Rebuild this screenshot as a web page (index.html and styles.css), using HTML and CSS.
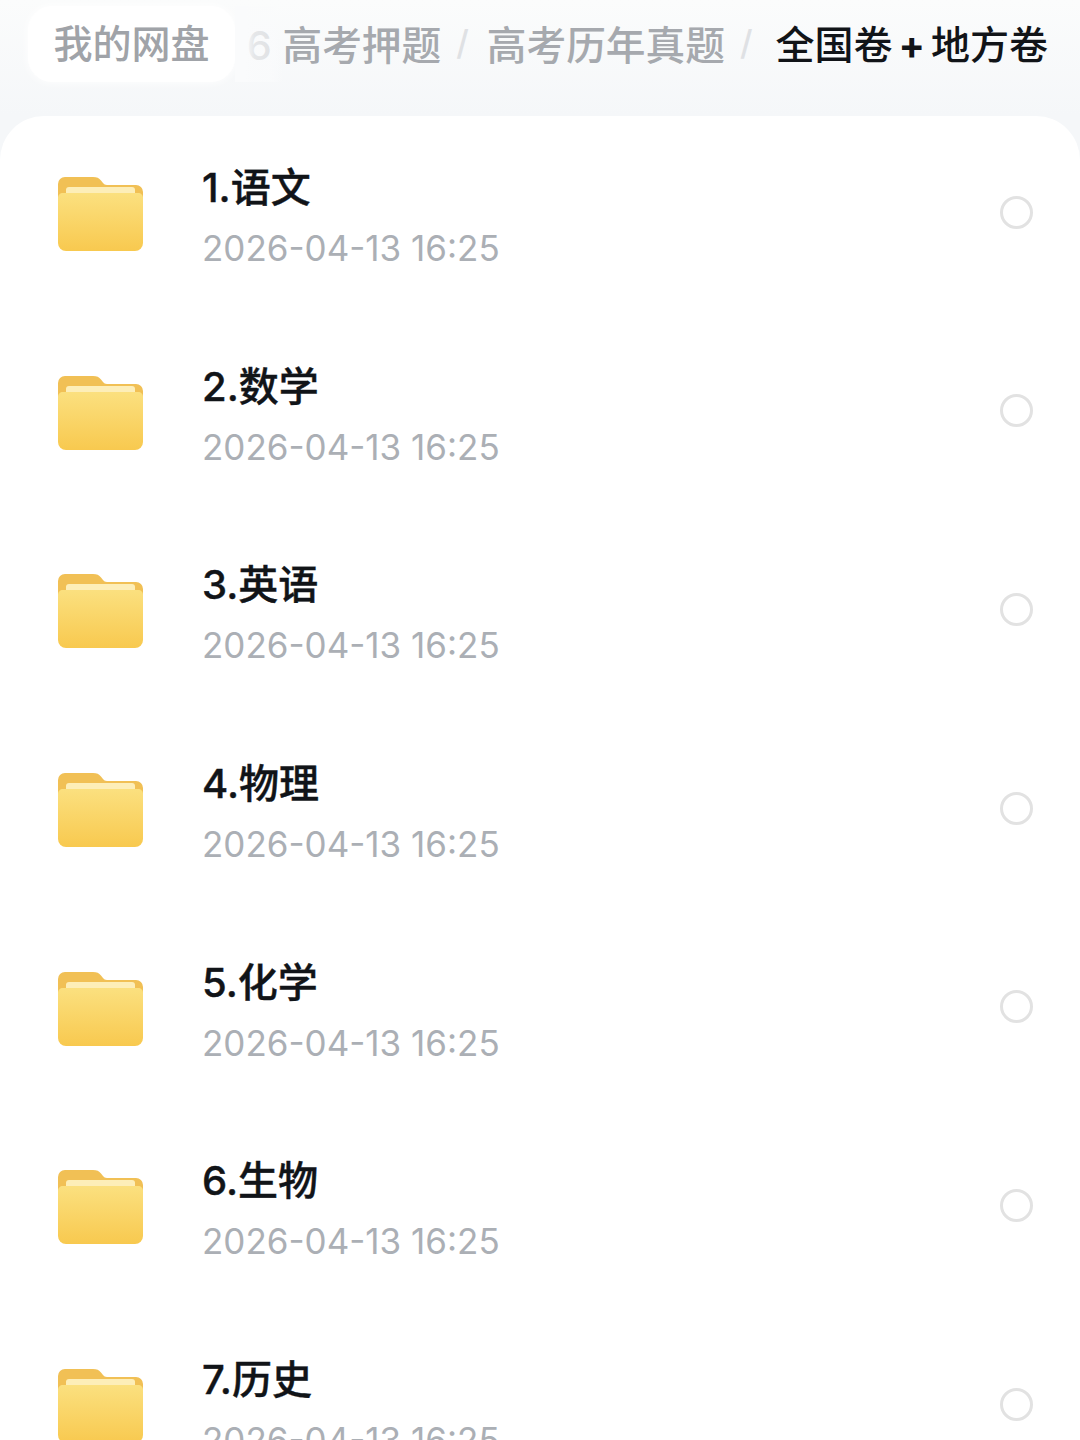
FILE: index.html
```html
<!DOCTYPE html>
<html lang="zh-CN">

<head>
  <meta charset="UTF-8">
  <meta name="viewport" content="width=device-width, initial-scale=1.0">
  <title>全国卷+地方卷</title>
  <link rel="stylesheet" href="styles.css">
</head>

<body>
  <svg class="defs" width="0" height="0" aria-hidden="true">
    <defs>
      <linearGradient id="folderFront" x1="0" y1="0" x2="0" y2="1">
        <stop offset="0" stop-color="#fbe07f" />
        <stop offset="1" stop-color="#f8c94f" />
      </linearGradient>
      <symbol id="folder" viewBox="0 0 85 75">
        <path d="M0 8a7 7 0 0 1 7-7h28c4 0 6 1 8 3.500l2 2.500c1 1.300 2 2 4 2h29a7 7 0 0 1 7 7v20H0z" fill="#f1c055" />
        <rect x="8" y="11" width="69" height="10" rx="3" fill="#fdeeb8" />
        <path d="M0 22c0-3 2-5 5-5h75c3 0 5 2 5 5v45a8 8 0 0 1-8 8H8a8 8 0 0 1-8-8z" fill="url(#folderFront)" />
      </symbol>
    </defs>
  </svg>

  <!-- 面包屑 -->
  <div class="crumbs">
    <div class="crumb-home">我的网盘</div>
    <div class="crumb-trail">
      <span>2026 高考押题</span>
      <i>/</i>
      <span>高考历年真题</span>
      <i>/</i>
      <span class="current">全国卷<b>+</b>地方卷</span>
    </div>
  </div>

  <!-- 文件列表 -->
  <div class="file-list">
    <div class="file-row">
      <svg class="folder-icon"><use href="#folder" /></svg>
      <div class="file-info">
        <div class="file-name">1.语文</div>
        <div class="file-time">2026-04-13 16:25</div>
      </div>
      <div class="file-check"></div>
    </div>
    <div class="file-row">
      <svg class="folder-icon"><use href="#folder" /></svg>
      <div class="file-info">
        <div class="file-name">2.数学</div>
        <div class="file-time">2026-04-13 16:25</div>
      </div>
      <div class="file-check"></div>
    </div>
    <div class="file-row">
      <svg class="folder-icon"><use href="#folder" /></svg>
      <div class="file-info">
        <div class="file-name">3.英语</div>
        <div class="file-time">2026-04-13 16:25</div>
      </div>
      <div class="file-check"></div>
    </div>
    <div class="file-row">
      <svg class="folder-icon"><use href="#folder" /></svg>
      <div class="file-info">
        <div class="file-name">4.物理</div>
        <div class="file-time">2026-04-13 16:25</div>
      </div>
      <div class="file-check"></div>
    </div>
    <div class="file-row">
      <svg class="folder-icon"><use href="#folder" /></svg>
      <div class="file-info">
        <div class="file-name">5.化学</div>
        <div class="file-time">2026-04-13 16:25</div>
      </div>
      <div class="file-check"></div>
    </div>
    <div class="file-row">
      <svg class="folder-icon"><use href="#folder" /></svg>
      <div class="file-info">
        <div class="file-name">6.生物</div>
        <div class="file-time">2026-04-13 16:25</div>
      </div>
      <div class="file-check"></div>
    </div>
    <div class="file-row">
      <svg class="folder-icon"><use href="#folder" /></svg>
      <div class="file-info">
        <div class="file-name">7.历史</div>
        <div class="file-time">2026-04-13 16:25</div>
      </div>
      <div class="file-check"></div>
    </div>
  </div>
</body>

</html>
```

FILE: styles.css
```css
* {
  margin: 0;
  padding: 0;
  box-sizing: border-box;
}

html,
body {
  height: 1440px;
  overflow: hidden;
}

body {
  font-family: "Inter", "Noto Sans CJK SC", sans-serif;
  background: linear-gradient(#fbfcfc, #f5f7f9 116px);
}

.defs {
  position: absolute;
}

/* 面包屑 */
.crumbs {
  display: flex;
  align-items: flex-start;
  height: 116px;
  padding: 6px 32px 0 28px;
  font-weight: 500;
}

.crumb-home {
  flex: none;
  width: 207px;
  height: 76px;
  font-size: 39px;
  line-height: 76px;
  text-align: center;
  color: #a0a3a8;
  background: #fff;
  border-radius: 24px;
  box-shadow: 0 0 10px #fff;
}

.crumb-trail {
  position: relative;
  flex: 1;
  min-width: 0;
  display: flex;
  justify-content: flex-end;
  align-items: center;
  gap: 18px;
  height: 76px;
  padding-bottom: 4px;
  overflow: hidden;
  white-space: nowrap;
  font-size: 39.700px;
  color: #a6a9ae;
}

/* 左侧文字淡出 */
.crumb-trail::before {
  content: "";
  position: absolute;
  left: 0;
  top: 0;
  bottom: 0;
  width: 48px;
  background: linear-gradient(90deg, #fafbfc 20%, rgba(250, 251, 252, 0.75) 40%, rgba(250, 251, 252, 0.7) 75%, rgba(250, 251, 252, 0));
}

.crumb-trail span {
  flex: none;
}

.crumb-trail i {
  flex: none;
  margin-left: -3px;
  font-style: normal;
  font-size: 34px;
  color: #dfe1e4;
}

.crumb-trail .current {
  margin-left: 5px;
  font-size: 39px;
  color: #111418;
}

.crumb-trail b {
  margin: 0 6px;
  font-weight: 700;
}

/* 文件列表 */
.file-list {
  display: flex;
  flex-direction: column;
  gap: 18.700px;
  padding: 6px 47px 0 58px;
  height: 1324px;
  background: #fff;
  border-radius: 44px 44px 0 0;
}

.file-row {
  flex: none;
  display: flex;
  align-items: center;
  height: 180px;
}

.folder-icon {
  flex: none;
  width: 85px;
  height: 75px;
  margin-right: 59px;
  margin-top: 3px;
}

.file-info {
  flex: 1;
  min-width: 0;
  padding-top: 12px;
}

.file-name {
  font-size: 40px;
  line-height: 50px;
  font-weight: 500;
  -webkit-text-stroke: 0.4px #111418;
  color: #111418;
}

.file-time {
  margin-top: 10px;
  font-size: 35px;
  line-height: 50px;
  color: #abafb5;
}

.file-check {
  flex: none;
  width: 33px;
  height: 33px;
  border: 3px solid #e2e2e2;
  border-radius: 50%;
}
```
